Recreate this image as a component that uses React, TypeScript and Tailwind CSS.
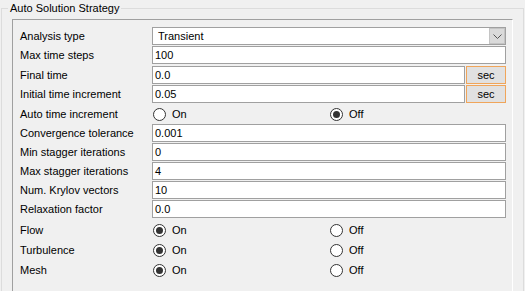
import React from 'react';

type Row =
  | { kind: 'text'; label: string; value: string; h: number; unit?: boolean }
  | { kind: 'select'; label: string; value: string; h: number }
  | { kind: 'radio'; label: string; on: boolean; h: number };

const rows: Row[] = [
  { kind: 'select', label: 'Analysis type', value: 'Transient', h: 19 },
  { kind: 'text', label: 'Max time steps', value: '100', h: 20 },
  { kind: 'text', label: 'Final time', value: '0.0', h: 19, unit: true },
  { kind: 'text', label: 'Initial time increment', value: '0.05', h: 19, unit: true },
  { kind: 'radio', label: 'Auto time increment', on: false, h: 20 },
  { kind: 'text', label: 'Convergence tolerance', value: '0.001', h: 19 },
  { kind: 'text', label: 'Min stagger iterations', value: '0', h: 19 },
  { kind: 'text', label: 'Max stagger iterations', value: '4', h: 19 },
  { kind: 'text', label: 'Num. Krylov vectors', value: '10', h: 19 },
  { kind: 'text', label: 'Relaxation factor', value: '0.0', h: 20 },
  { kind: 'radio', label: 'Flow', on: true, h: 20 },
  { kind: 'radio', label: 'Turbulence', on: true, h: 20 },
  { kind: 'radio', label: 'Mesh', on: true, h: 20 },
];

const Radio: React.FC<{ checked: boolean; label: string }> = ({ checked, label }) => (
  <div className="flex items-center">
    <span className="w-[13px] h-[13px] rounded-full border border-[#333333] bg-white flex items-center justify-center">
      {checked && <span className="w-[7px] h-[7px] rounded-full bg-[#333333]" />}
    </span>
    <span className="ml-[6px]">{label}</span>
  </div>
);

const App: React.FC = () => {
  return (
    <div
      className="w-[525px] h-[291px] bg-[#f0f0f0] overflow-hidden text-[11px] leading-none text-black"
      style={{ fontFamily: '"Liberation Sans", Arial, sans-serif' }}
    >
      {/* Group box */}
      <div className="relative mt-[8px] ml-[1px] w-[523px] h-[300px] border-t border-l border-r border-[#dcdcdc]">
        <span className="absolute -top-[8px] left-[6px] px-[2px] bg-[#f0f0f0] leading-[14px]">
          Auto Solution Strategy
        </span>

        {/* Inner panel */}
        <div className="ml-[10px] mt-[10px] w-[501px] h-[290px] border-l border-t border-[#a0a0a0] border-r border-r-white pl-[7px] pt-[7px]">
          {rows.map((row) => (
            <div
              key={row.label}
              className={`flex ${row.kind === 'radio' ? 'items-center' : 'items-start'} ${
                row.h === 20 ? 'h-[20px]' : 'h-[19px]'
              }`}
            >
              <div className={`w-[132px] shrink-0 ${row.kind === 'radio' ? '' : 'h-[18px] flex items-center'}`}>
                {row.label}
              </div>

              {row.kind === 'select' && (
                <div className="w-[354px] h-[18px] border border-[#a0a0a0] bg-white flex items-center">
                  <span className="flex-1 pl-[5px]">{row.value}</span>
                  <span className="w-[16px] h-[16px] bg-[#dadada] border border-[#c4c4c4] flex items-center justify-center">
                    <svg width="9" height="5" viewBox="0 0 9 5">
                      <path d="M0.5 0.5 L4.5 4.5 L8.5 0.5" fill="none" stroke="#555" strokeWidth="1" />
                    </svg>
                  </span>
                </div>
              )}

              {row.kind === 'text' && (
                <div className="flex">
                  <div
                    className={`${row.unit ? 'w-[313px]' : 'w-[354px]'} h-[18px] border border-[#a0a0a0] bg-white flex items-center pl-[2px]`}
                  >
                    {row.value}
                  </div>
                  {row.unit && (
                    <div className="ml-[1px] w-[40px] h-[18px] border border-[#f0a55a] bg-[#e1e1e1] flex items-center justify-center">
                      sec
                    </div>
                  )}
                </div>
              )}

              {row.kind === 'radio' && (
                <div className="flex pl-[1px]">
                  <div className="w-[177px]">
                    <Radio checked={row.on} label="On" />
                  </div>
                  <Radio checked={!row.on} label="Off" />
                </div>
              )}
            </div>
          ))}
        </div>
      </div>
    </div>
  );
};

export default App;
